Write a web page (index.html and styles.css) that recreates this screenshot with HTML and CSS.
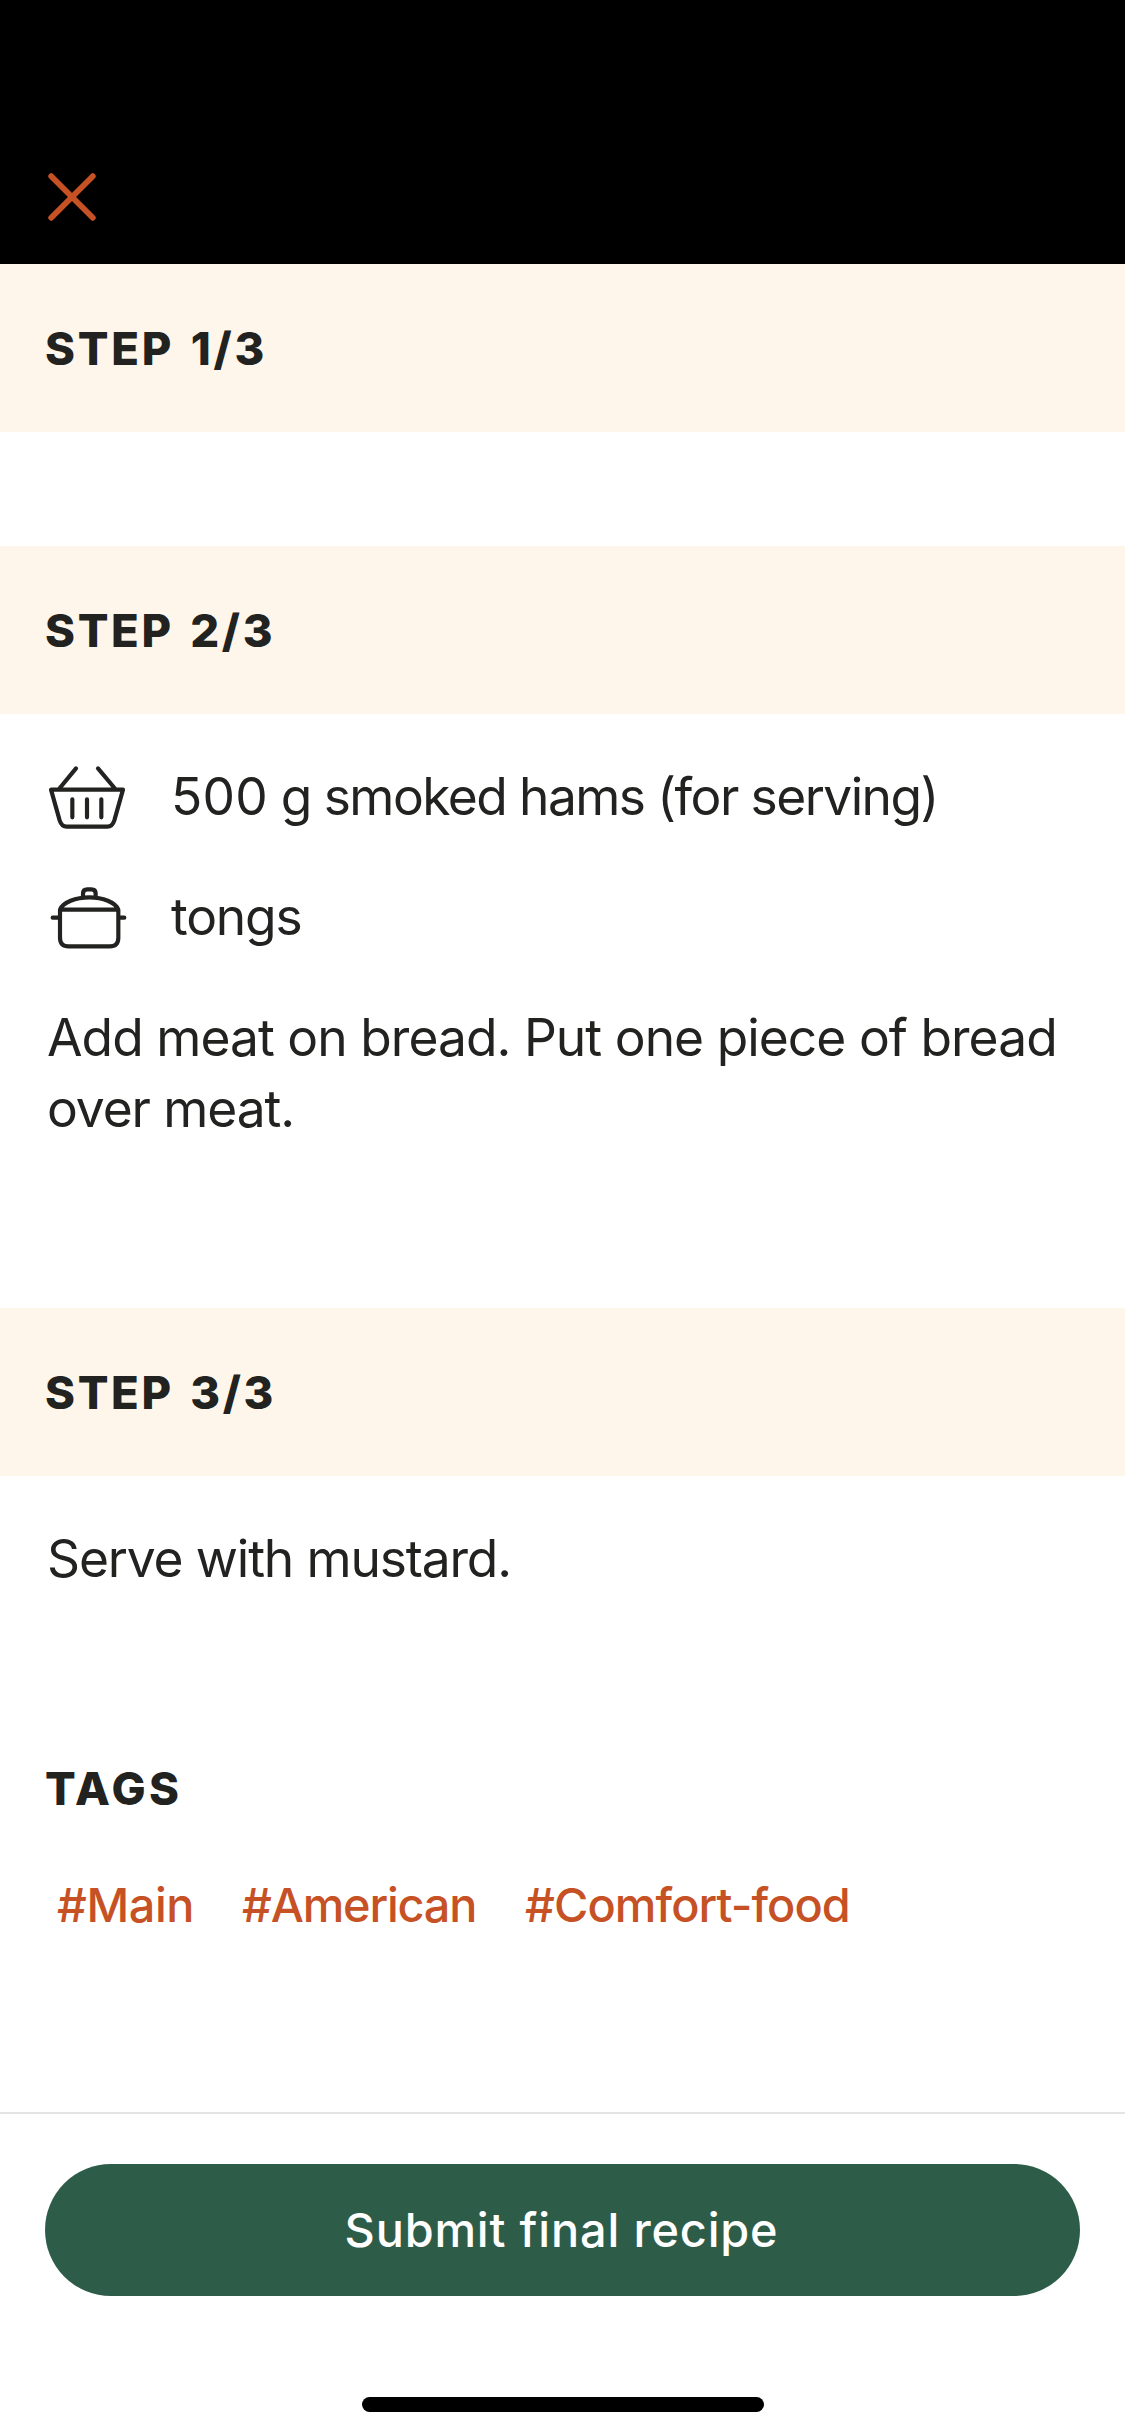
FILE: index.html
```html
<!DOCTYPE html>
<html lang="en">
<head>
<meta charset="utf-8">
<title>Recipe preview</title>
<link rel="stylesheet" href="styles.css">
</head>
<body>
<div class="screen">
  <header class="topbar">
    <button class="close" aria-label="Close">
      <svg viewBox="0 0 48 48" fill="none" stroke="currentColor" stroke-width="5.8" stroke-linecap="round"><path d="M3.2 3.2 44.8 44.8M44.8 3.2 3.2 44.8"/></svg>
    </button>
  </header>
  <main class="content">
    <section class="step step-one">
      <h2 class="step-title step-title-first">STEP 1/3</h2>
    </section>
    <section class="step step-two">
      <h2 class="step-title">STEP 2/3</h2>
      <div class="items">
        <div class="item">
          <svg class="item-icon" viewBox="0 0 300 270" fill="none" stroke="currentColor" stroke-width="12.5" stroke-linecap="round" stroke-linejoin="round"><path d="M33 104H249L223 196Q217 215 202 215H80Q65 215 59 196ZM57 102 108 40M226 102 174 40M97 133V187M141 133V187M184 133V187"/></svg>
          <span class="item-text ingredient"><span class="amount">500</span> g smoked hams (for serving)</span>
        </div>
        <div class="item">
          <svg class="item-icon" viewBox="0 0 300 270" fill="none" stroke="currentColor" stroke-width="12.5" stroke-linecap="round" stroke-linejoin="round"><path d="M60 104H235V188Q235 214 209 214H86Q60 214 60 188ZM60 104C68 82 108 67 148 67S227 82 235 104M38 128H60M235 128H253M129 66V56Q129 43 142 43H154Q167 43 167 56V66"/></svg>
          <span class="item-text">tongs</span>
        </div>
      </div>
      <p class="description">Add meat on bread. Put one piece of bread <span class="line-end">over meat.</span></p>
    </section>
    <section class="step step-three">
      <h2 class="step-title">STEP 3/3</h2>
      <p class="description serve">Serve with mustard.</p>
    </section>
    <section class="tags">
      <h2 class="tags-title">TAGS</h2>
      <div class="tag-list">
        <a class="tag tag-main">#Main</a>
        <a class="tag tag-american">#American</a>
        <a class="tag">#Comfort-food</a>
      </div>
    </section>
  </main>
  <footer class="footer">
    <button class="submit">Submit final recipe</button>
    <div class="home-indicator"></div>
  </footer>
</div>
</body>
</html>
```
FILE: styles.css
```css
* { box-sizing: border-box; }
body {
  margin: 0;
  background: #fff;
  color: #222221;
  font-family: Inter, "Liberation Sans", sans-serif;
}
h2, p { margin: 0; }
button { border: 0; padding: 0; background: none; font-family: inherit; }
svg { display: block; }

.screen { width: 1125px; height: 2436px; display: flex; flex-direction: column; overflow: hidden; }

.topbar { height: 264px; flex: none; background: #000; padding: 173px 0 0 48px; }
.close { display: block; width: 48px; height: 48px; color: #c65125; }

.content { height: 1848px; flex: none; }
.step-one { height: 282px; }
.step-two { height: 762px; }
.step-three { height: 424px; }

.step-title, .tags-title {
  font-size: 45.4px;
  font-weight: 800;
}
.step-title {
  height: 168px;
  line-height: 170px;
  padding-left: 45px;
  background: #fef6ea;
  letter-spacing: 2.7px;
  word-spacing: 3.8px;
}
.step-title-first { letter-spacing: 2.8px; }

.items { display: flex; flex-direction: column; gap: 30px; padding: 41px 0 0 40px; }
.item { display: flex; align-items: center; gap: 31px; height: 90px; }
.item-icon { width: 100px; height: 90px; }
.item-text { font-size: 51.5px; line-height: 72px; padding-bottom: 8px; letter-spacing: -1.18px; white-space: nowrap; }
.ingredient { letter-spacing: -1.57px; }
.amount { letter-spacing: 0.2px; }

.description {
  padding: 37px 40px 0 47px;
  font-size: 51.5px;
  line-height: 71px;
  letter-spacing: -0.96px;
}
.line-end { letter-spacing: -1.09px; }
.serve { padding-top: 47px; letter-spacing: -1.15px; }

.tags { padding: 28px 0 0 45px; }
.tags-title { line-height: 58px; letter-spacing: 3.46px; }
.tag-list { display: flex; padding: 57px 0 0 12px; }
.tag { font-size: 46.8px; font-weight: 500; line-height: 60px; color: #c65125; letter-spacing: -0.88px; }
.tag-main { width: 185px; letter-spacing: -0.4px; }
.tag-american { width: 283px; letter-spacing: -1.18px; }

.footer {
  flex: 1;
  border-top: 2px solid #e4e4e2;
  padding: 50px 45px 0;
  display: flex;
  flex-direction: column;
  align-items: center;
}
.submit {
  width: 100%;
  height: 132px;
  border-radius: 66px;
  background: #2d5d49;
  color: #fff;
  font-size: 46.8px;
  font-weight: 500;
  line-height: 130px;
  padding: 0 2px 1px 0;
  letter-spacing: 0.85px;
}
.home-indicator { width: 402px; height: 15px; border-radius: 8px; background: #000; margin-top: 101px; }
```
